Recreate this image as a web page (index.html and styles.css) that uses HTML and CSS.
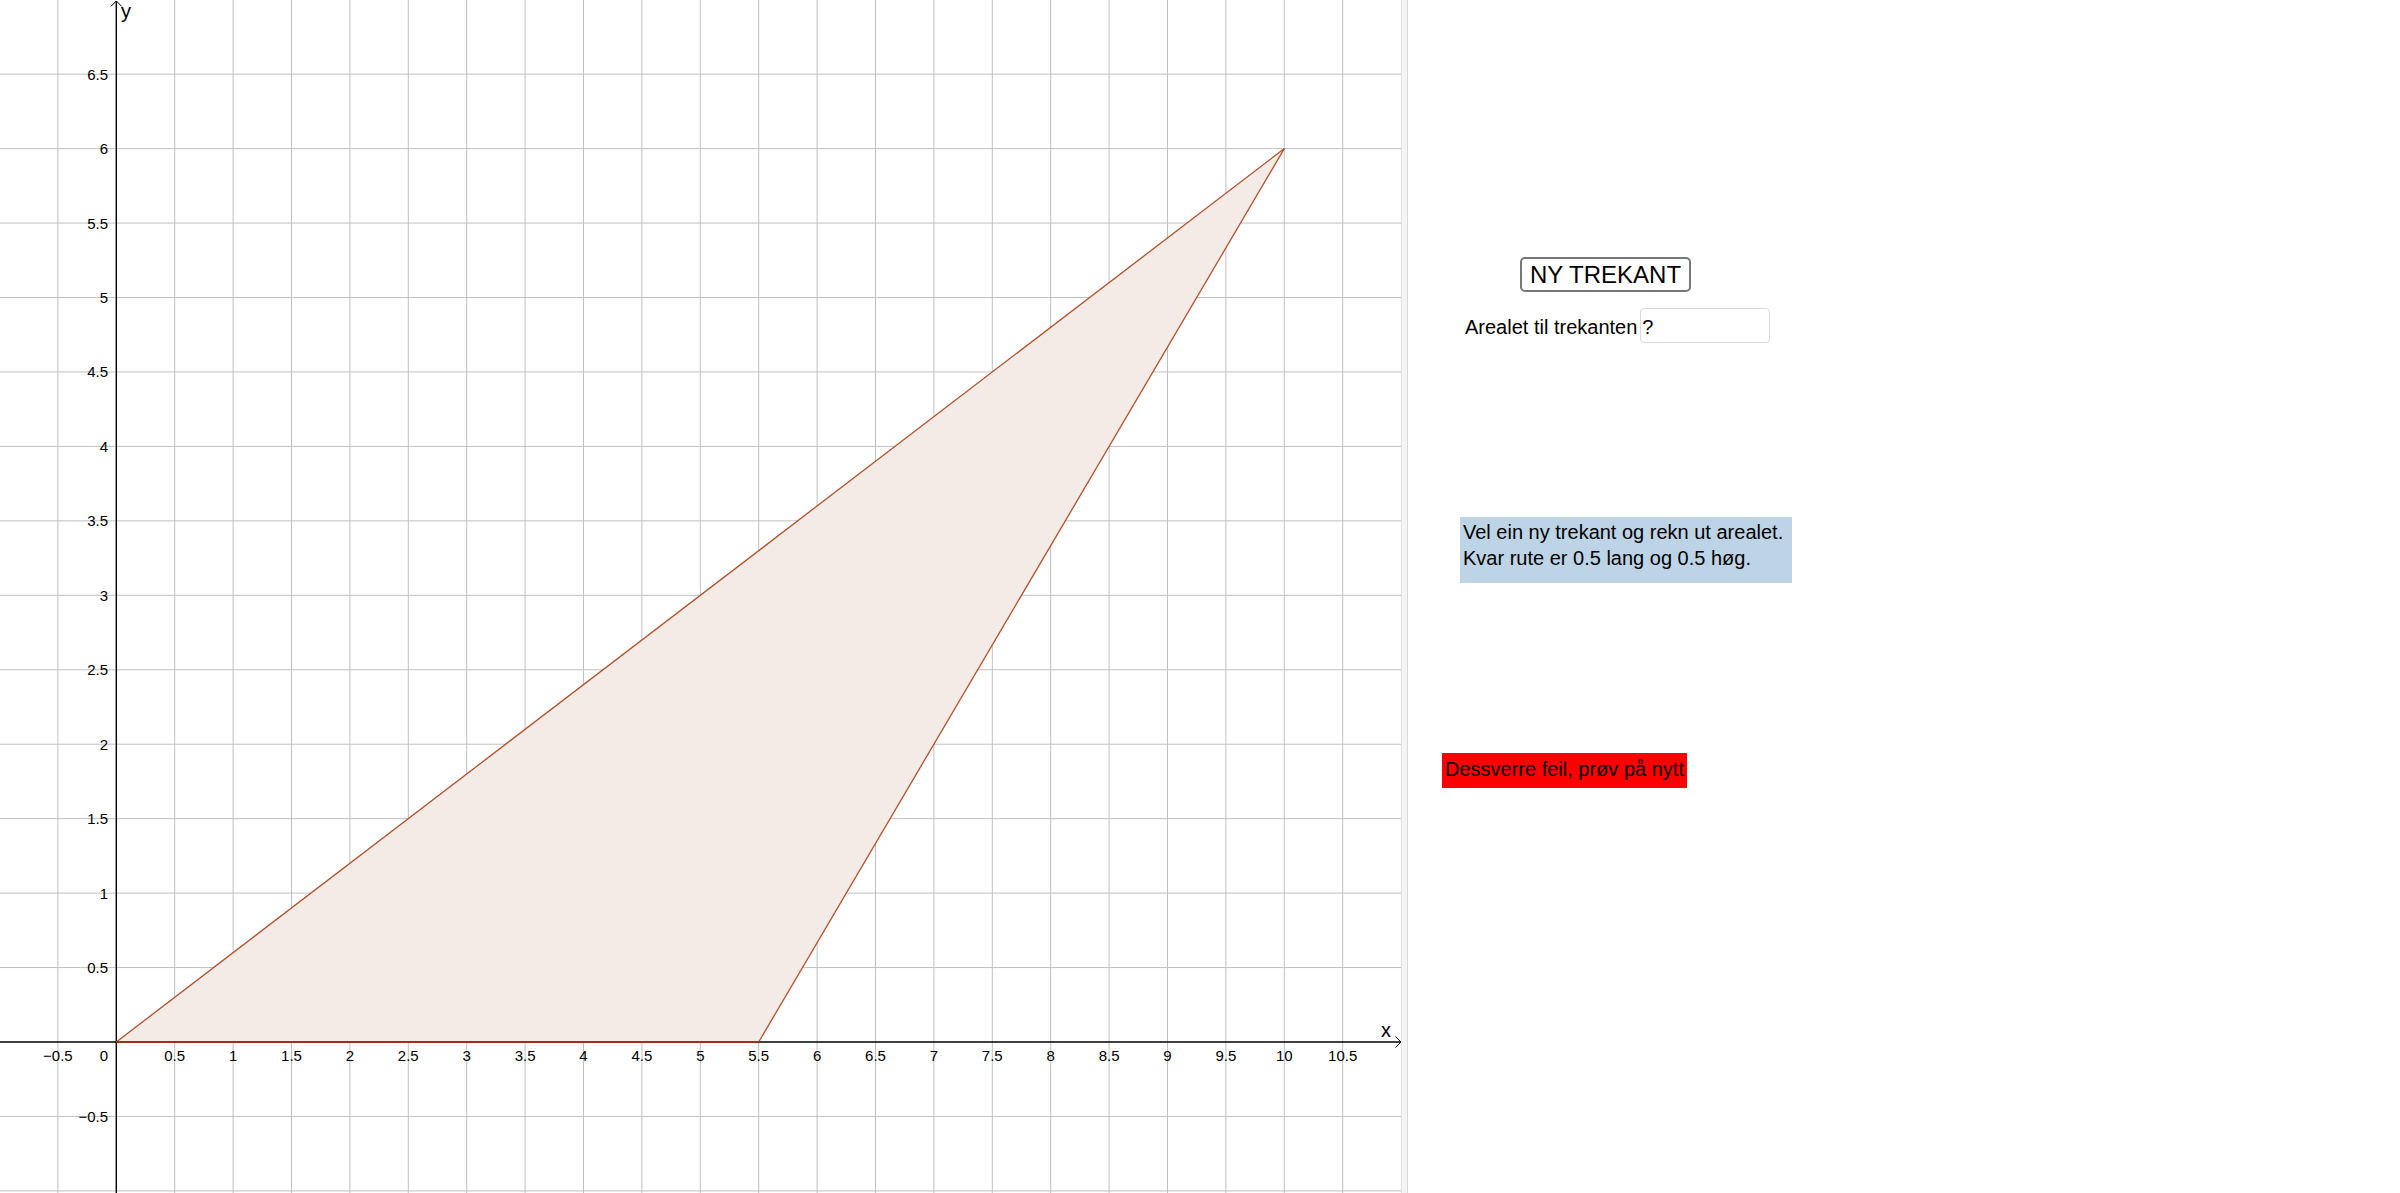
FILE: index.html
```html
<!DOCTYPE html>
<html lang="nn">
<head>
<meta charset="utf-8">
<title>Areal av trekant</title>
<link rel="stylesheet" href="styles.css">
</head>
<body>
<div class="app">
  <div class="graphics">
    <svg class="plot" width="1401" height="1193" viewBox="0 0 1401 1193" xmlns="http://www.w3.org/2000/svg">
      <g class="grid">
        <line x1="57.9" y1="0" x2="57.9" y2="1193"/>
        <line x1="174.7" y1="0" x2="174.7" y2="1193"/>
        <line x1="233.1" y1="0" x2="233.1" y2="1193"/>
        <line x1="291.5" y1="0" x2="291.5" y2="1193"/>
        <line x1="349.9" y1="0" x2="349.9" y2="1193"/>
        <line x1="408.3" y1="0" x2="408.3" y2="1193"/>
        <line x1="466.7" y1="0" x2="466.7" y2="1193"/>
        <line x1="525.1" y1="0" x2="525.1" y2="1193"/>
        <line x1="583.5" y1="0" x2="583.5" y2="1193"/>
        <line x1="641.9" y1="0" x2="641.9" y2="1193"/>
        <line x1="700.3" y1="0" x2="700.3" y2="1193"/>
        <line x1="758.7" y1="0" x2="758.7" y2="1193"/>
        <line x1="817.1" y1="0" x2="817.1" y2="1193"/>
        <line x1="875.5" y1="0" x2="875.5" y2="1193"/>
        <line x1="933.9" y1="0" x2="933.9" y2="1193"/>
        <line x1="992.3" y1="0" x2="992.3" y2="1193"/>
        <line x1="1050.7" y1="0" x2="1050.7" y2="1193"/>
        <line x1="1109.1" y1="0" x2="1109.1" y2="1193"/>
        <line x1="1167.5" y1="0" x2="1167.5" y2="1193"/>
        <line x1="1225.9" y1="0" x2="1225.9" y2="1193"/>
        <line x1="1284.3" y1="0" x2="1284.3" y2="1193"/>
        <line x1="1342.7" y1="0" x2="1342.7" y2="1193"/>
        <line x1="0" y1="74.15" x2="1401" y2="74.15"/>
        <line x1="0" y1="148.6" x2="1401" y2="148.6"/>
        <line x1="0" y1="223.05" x2="1401" y2="223.05"/>
        <line x1="0" y1="297.5" x2="1401" y2="297.5"/>
        <line x1="0" y1="371.95" x2="1401" y2="371.95"/>
        <line x1="0" y1="446.4" x2="1401" y2="446.4"/>
        <line x1="0" y1="520.85" x2="1401" y2="520.85"/>
        <line x1="0" y1="595.3" x2="1401" y2="595.3"/>
        <line x1="0" y1="669.75" x2="1401" y2="669.75"/>
        <line x1="0" y1="744.2" x2="1401" y2="744.2"/>
        <line x1="0" y1="818.65" x2="1401" y2="818.65"/>
        <line x1="0" y1="893.1" x2="1401" y2="893.1"/>
        <line x1="0" y1="967.55" x2="1401" y2="967.55"/>
        <line x1="0" y1="1116.45" x2="1401" y2="1116.45"/>
        <line x1="0" y1="1190.9" x2="1401" y2="1190.9"/>
      </g>
      <polygon class="tri-fill" points="116.3,1042 758.7,1042 1284.3,148.6"/>
      <g class="axes">
        <line x1="116.3" y1="1" x2="116.3" y2="1193"/>
        <line x1="0" y1="1042" x2="1400" y2="1042"/>
        <polyline class="arrow" points="110.8,6.5 116.3,1 121.8,6.5"/>
        <polyline class="arrow" points="1395.5,1036.5 1401,1042 1395.5,1047.5"/>
      </g>
      <line class="tri-edge" x1="116.3" y1="1042" x2="1284.3" y2="148.6"/>
      <line class="tri-edge" x1="758.7" y1="1042" x2="1284.3" y2="148.6"/>
      <line class="tri-base" x1="116.3" y1="1042" x2="758.7" y2="1042"/>
      <g class="ylabels">
        <text x="108" y="79.6">6.5</text>
        <text x="108" y="154.1">6</text>
        <text x="108" y="228.5">5.5</text>
        <text x="108" y="303">5</text>
        <text x="108" y="377.4">4.5</text>
        <text x="108" y="451.9">4</text>
        <text x="108" y="526.3">3.5</text>
        <text x="108" y="600.8">3</text>
        <text x="108" y="675.2">2.5</text>
        <text x="108" y="749.7">2</text>
        <text x="108" y="824.1">1.5</text>
        <text x="108" y="898.6">1</text>
        <text x="108" y="973">0.5</text>
        <text x="108" y="1061">0</text>
        <text x="108" y="1121.9">−0.5</text>
      </g>
      <g class="xlabels">
        <text x="57.9" y="1061">−0.5</text>
        <text x="174.7" y="1061">0.5</text>
        <text x="233.1" y="1061">1</text>
        <text x="291.5" y="1061">1.5</text>
        <text x="349.9" y="1061">2</text>
        <text x="408.3" y="1061">2.5</text>
        <text x="466.7" y="1061">3</text>
        <text x="525.1" y="1061">3.5</text>
        <text x="583.5" y="1061">4</text>
        <text x="641.9" y="1061">4.5</text>
        <text x="700.3" y="1061">5</text>
        <text x="758.7" y="1061">5.5</text>
        <text x="817.1" y="1061">6</text>
        <text x="875.5" y="1061">6.5</text>
        <text x="933.9" y="1061">7</text>
        <text x="992.3" y="1061">7.5</text>
        <text x="1050.7" y="1061">8</text>
        <text x="1109.1" y="1061">8.5</text>
        <text x="1167.5" y="1061">9</text>
        <text x="1225.9" y="1061">9.5</text>
        <text x="1284.3" y="1061">10</text>
        <text x="1342.7" y="1061">10.5</text>
      </g>
      <text class="axis-name" x="1381" y="1037">x</text>
      <text class="axis-name" x="121" y="18">y</text>
    </svg>
  </div>
  <div class="splitter"></div>
  <div class="panel">
    <button class="new-btn" type="button">NY TREKANT</button>
    <div class="answer-row">
      <label class="answer-label" for="areal">Arealet til trekanten</label>
      <input class="answer-input" id="areal" type="text" value="?">
    </div>
    <div class="hint">Vel ein ny trekant og rekn ut arealet.<br>Kvar rute er 0.5 lang og 0.5 høg.</div>
    <div class="feedback">Dessverre feil, prøv på nytt</div>
  </div>
</div>
</body>
</html>
```

FILE: styles.css
```css
html, body {
  margin: 0;
  padding: 0;
  background: #ffffff;
}

body {
  width: 2400px;
  height: 1193px;
  overflow: hidden;
  font-family: "Liberation Sans", Arial, sans-serif;
  color: #000000;
}

.app {
  display: flex;
  height: 1193px;
}

.graphics {
  width: 1401px;
  height: 1193px;
  flex: none;
}

.plot {
  display: block;
}

.grid line {
  stroke: #c0c0c0;
  stroke-width: 1;
}

.tri-fill {
  fill: #f5ebe6;
  stroke: none;
}

.axes line {
  stroke: #000000;
  stroke-width: 1.4;
}

.axes .arrow {
  fill: none;
  stroke: #000000;
  stroke-width: 1;
}

.tri-edge {
  stroke: #b0502a;
  stroke-width: 1.3;
}

.tri-base {
  stroke: #a0300f;
  stroke-width: 2;
}

.ylabels text,
.xlabels text {
  font-family: "Liberation Sans", Arial, sans-serif;
  font-size: 15px;
  fill: #000000;
}

.ylabels text {
  text-anchor: end;
}

.xlabels text {
  text-anchor: middle;
}

.axis-name {
  font-family: "Liberation Sans", Arial, sans-serif;
  font-size: 20px;
  fill: #000000;
}

.splitter {
  flex: none;
  width: 7px;
  box-sizing: border-box;
  background: #f5f5f5;
  border-left: 1px solid #e2e2e2;
  border-right: 1px solid #d9d9d9;
}

.panel {
  flex: 1;
  display: flex;
  flex-direction: column;
  align-items: flex-start;
}

.new-btn {
  margin: 257px 0 0 112px;
  width: 171px;
  height: 35px;
  box-sizing: border-box;
  padding: 0;
  background: #ffffff;
  border: 2px solid #777777;
  border-radius: 5px;
  font-family: "Liberation Sans", Arial, sans-serif;
  font-size: 24px;
  color: #000000;
  line-height: 31px;
}

.answer-row {
  margin: 16px 0 0 57px;
  display: flex;
  align-items: center;
  gap: 3px;
}

.answer-label {
  font-size: 20px;
  line-height: 23px;
  padding-top: 4px;
}

.answer-input {
  width: 130px;
  height: 35px;
  box-sizing: border-box;
  margin: 0;
  padding: 4px 1px 0;
  border: 1px solid #dadada;
  border-radius: 4px;
  font-family: "Liberation Sans", Arial, sans-serif;
  font-size: 20px;
  color: #000000;
  outline: none;
}

.hint {
  margin: 174px 0 0 52px;
  width: 332px;
  height: 66px;
  box-sizing: border-box;
  padding: 2px 4px 0 3px;
  background: #bdd4e7;
  font-size: 20px;
  line-height: 26px;
}

.feedback {
  margin: 170px 0 0 34px;
  height: 35px;
  box-sizing: border-box;
  padding: 3px 3px 0 3px;
  background: #ff0000;
  font-size: 20px;
  line-height: 26px;
}
```
